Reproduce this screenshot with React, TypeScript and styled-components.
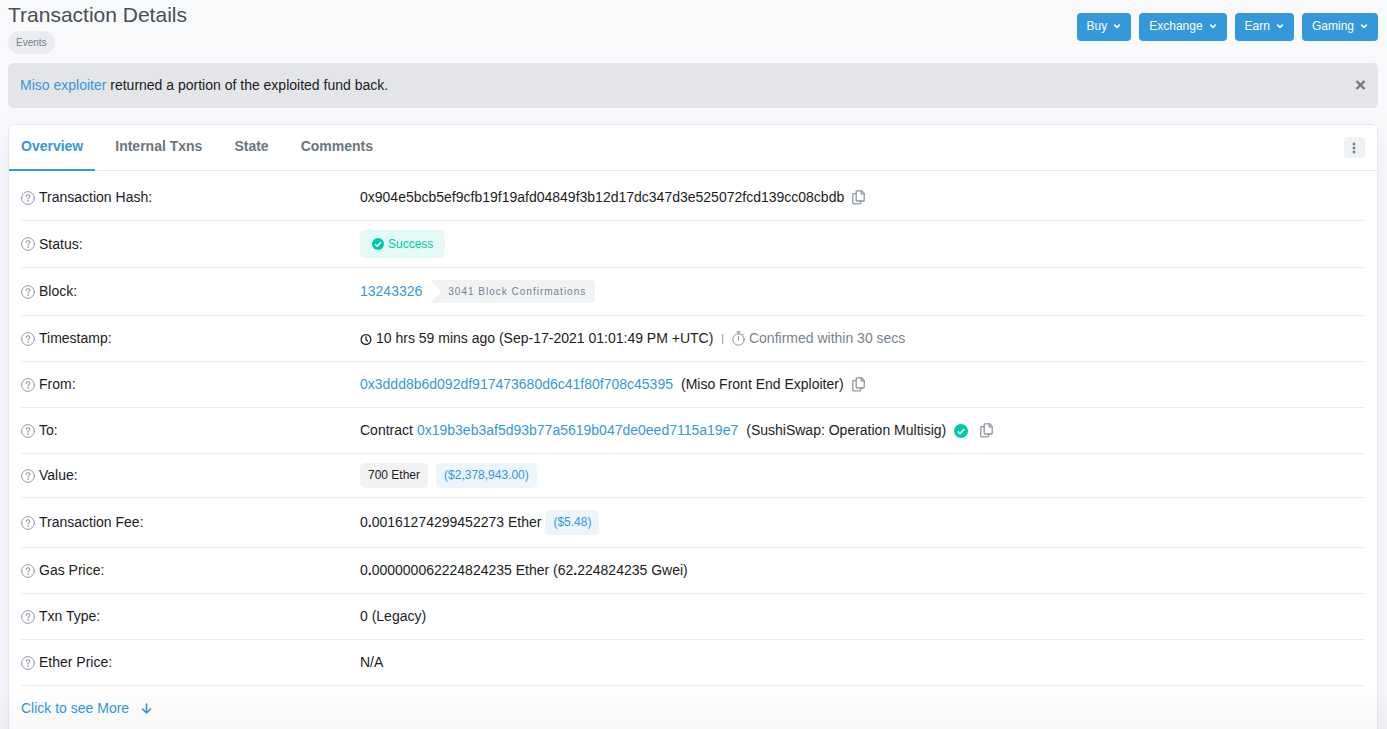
import React from "react";
import styled, { createGlobalStyle, css } from "styled-components";

const Global = createGlobalStyle`
  *, *::before, *::after { box-sizing: border-box; }
  body {
    margin: 0;
    background: #f8f9fb;
    color: #1a1c1e;
    font: 14px/22px "Liberation Sans", Arial, sans-serif;
  }
  button { font: inherit; cursor: pointer; }
`;

const Page = styled.div`
  padding: 0 9px 0 8px;
`;

const Header = styled.header`
  display: flex;
  justify-content: space-between;
  align-items: flex-start;
`;

const Title = styled.h1`
  margin: 0;
  padding: 3px 0 4px;
  font-size: 21px;
  line-height: 24px;
  font-weight: 400;
  color: #4a4f55;
`;

const Tag = styled.span`
  display: block;
  width: max-content;
  padding: 0 8px;
  border-radius: 12px;
  background: #ebecf0;
  color: #77838f;
  font-size: 10px;
  line-height: 23px;
`;

const Actions = styled.nav`
  display: flex;
  gap: 8px;
  padding-top: 13px;
`;

const ActionButton = styled.button`
  display: flex;
  align-items: center;
  gap: 6px;
  padding: 4px 10px 6px;
  border: 0;
  border-radius: 4px;
  background: #3498db;
  color: #fff;
  font-size: 12px;
  line-height: 18px;
`;

const Notice = styled.div`
  display: flex;
  justify-content: space-between;
  align-items: center;
  margin: 9px 0 16px;
  padding: 11px 12px 12px;
  border-radius: 5px;
  background: #e4e5e9;
`;

const Link = styled.a`
  color: #3498db;
  text-decoration: none;
`;

const IconButton = styled.button`
  display: inline-flex;
  align-items: center;
  padding: 0;
  border: 0;
  background: none;
  color: #77838f;
`;

const CopyButton = styled(IconButton)`
  color: #8c98a4;
`;

const Card = styled.main`
  border: 1px solid #e7eaf3;
  border-radius: 6px 6px 0 0;
  background: #fff;
  box-shadow: 0 8px 20px rgba(189, 197, 209, 0.2);
`;

const TabBar = styled.div`
  display: flex;
  justify-content: space-between;
  align-items: center;
  padding-right: 12px;
  border-bottom: 1px solid #e7eaf3;
`;

const Tabs = styled.div`
  display: flex;
  gap: 8px;
  margin-bottom: -1px;
`;

const Tab = styled.button<{ $active?: boolean }>`
  padding: 10px 12px 12px;
  border: 0;
  border-bottom: 2px solid ${(p) => (p.$active ? "#3498db" : "transparent")};
  background: none;
  color: ${(p) => (p.$active ? "#3498db" : "#6c757e")};
  font-weight: 700;
  line-height: 22px;
`;

const MoreButton = styled(IconButton)`
  padding: 4px;
  border-radius: 4px;
  background: #f0f1f3;
`;

const Details = styled.dl`
  margin: 0;
  padding: 4px 12px 0;
  line-height: 21px;
`;

const Row = styled.div<{ $pad: number }>`
  display: grid;
  grid-template-columns: 1fr 3fr;
  column-gap: 4px;
  align-items: center;
  padding: ${(p) => p.$pad}px 0;
  border-bottom: 1px solid #e9ecf2;
`;

const Label = styled.dt`
  display: flex;
  align-items: center;
  gap: 4px;
  svg { color: #8c98a4; }
`;

const Value = styled.dd<{ $gap: number }>`
  display: flex;
  flex-wrap: wrap;
  align-items: center;
  column-gap: ${(p) => p.$gap}px;
  min-height: 27px;
  margin: 0;
`;

const Group = styled.span<{ $gap?: number }>`
  display: inline-flex;
  align-items: center;
  gap: ${(p) => p.$gap ?? 4}px;
`;

const Muted = styled(Group)`
  color: #77838f;
`;

const Divider = styled.span`
  color: #77838f;
  font-size: 10px;
`;

const tones = {
  success: css`background: #e5f9f6; color: #00c9a7;`,
  neutral: css`background: #f1f2f4; color: #1e2022;`,
  info: css`background: #ebf5fb; color: #3498db;`,
};

const Badge = styled.span<{ $tone: keyof typeof tones }>`
  display: inline-flex;
  align-items: center;
  gap: 4px;
  padding: 0 8px;
  border-radius: 5px;
  font-size: 12px;
  line-height: 25px;
  ${(p) => tones[p.$tone]}
`;

const StatusBadge = styled(Badge)`
  padding: 0 12px;
  line-height: 28px;
`;

const Confirmations = styled.span`
  padding: 0 9px 0 18px;
  border-radius: 0 4px 4px 0;
  background: #f1f2f4;
  clip-path: polygon(0 0, 100% 0, 100% 100%, 0 100%, 11px 50%);
  color: #77838f;
  font-size: 10px;
  line-height: 23px;
  letter-spacing: 1px;
`;

const MoreLink = styled(Link)`
  display: inline-flex;
  align-items: center;
  gap: 12px;
  padding: 11px 12px 12px;
`;

const BottomFade = styled.div`
  position: fixed;
  inset: auto 0 0;
  height: 44px;
  background: linear-gradient(rgba(0, 0, 0, 0), rgba(0, 0, 0, 0.03));
  pointer-events: none;
`;

const stroke = { fill: "none", stroke: "currentColor", strokeLinecap: "round", strokeLinejoin: "round" } as const;

const Help = () => (
  <svg width="14" height="14" viewBox="0 0 14 14" {...stroke} aria-hidden="true">
    <circle cx="7" cy="7" r="6.4" />
    <path d="M5.2 5.4C5.3 4.3 6 3.8 7 3.8s1.9.6 1.9 1.5C8.900 6.600 7 6.700 7 8" strokeWidth="1.100" />
    <circle cx="7" cy="10" r=".5" fill="currentColor" strokeWidth=".5" />
  </svg>
);

const Check = ({ size = 12 }: { size?: number }) => (
  <svg width={size} height={size} viewBox="0 0 14 14" fill="none" aria-hidden="true">
    <circle cx="7" cy="7" r="7" fill="#00c9a7" />
    <path d="M3.700 7.300 6.100 9.600 10.400 5" stroke="#fff" strokeWidth="1.700" />
  </svg>
);

const Chevron = () => (
  <svg width="8" height="8" viewBox="0 0 8 8" {...stroke} strokeWidth="1.700" aria-hidden="true">
    <path d="M1.700 3.200 4 5.400 6.300 3.200" />
  </svg>
);

const Clock = () => (
  <svg width="12" height="12" viewBox="0 0 12 12" {...stroke} strokeWidth="1.200" aria-hidden="true">
    <circle cx="6" cy="6.500" r="4.900" />
    <path d="M6 3.700v3l1.600 1.300" />
  </svg>
);

const Stopwatch = () => (
  <svg width="13" height="15" viewBox="0 0 13 15" {...stroke} strokeWidth=".9" aria-hidden="true">
    <circle cx="6.500" cy="8.500" r="5.700" />
    <path d="M4.800.8h3.400M6.500.8v2M6.500 5.500v3.500M11 3.700l.8-.8" />
  </svg>
);

const Copy = () => (
  <CopyButton type="button" aria-label="Copy to clipboard">
    <svg width="13" height="15" viewBox="0 0 13 15" {...stroke} strokeWidth="1.300" aria-hidden="true">
      <path d="M5 .8h4.600l2.600 2.600v6.800c0 .5-.3.800-.8.800H5c-.5 0-.8-.3-.8-.8V1.600c0-.5.3-.8.800-.8z" />
      <path d="M9.200.8v3h3M4.200 3.600H1.600c-.5 0-.8.3-.8.800v8.700c0 .5.3.8.8.8h6.200c.5 0 .8-.3.800-.8V11" />
    </svg>
  </CopyButton>
);

const menus = ["Buy", "Exchange", "Earn", "Gaming"];
const tabs = ["Overview", "Internal Txns", "State", "Comments"];

type ItemProps = { label: string; pad?: number; gap?: number; children: React.ReactNode };

const Item = ({ label, pad = 9, gap = 8, children }: ItemProps) => (
  <Row $pad={pad}>
    <Label><Help />{label}:</Label>
    <Value $gap={gap}>{children}</Value>
  </Row>
);

export default function App() {
  return (
    <>
      <Global />
      <Page>
        <Header>
          <div>
            <Title>Transaction Details</Title>
            <Tag>Events</Tag>
          </div>
          <Actions>
            {menus.map((m) => <ActionButton key={m} type="button">{m}<Chevron /></ActionButton>)}
          </Actions>
        </Header>
        <Notice>
          <span><Link href="#exploiter">Miso exploiter</Link> returned a portion of the exploited fund back.</span>
          <IconButton type="button" aria-label="Close">
            <svg width="11" height="11" viewBox="0 0 11 11" fill="none" stroke="#77797d" strokeWidth="2.400" aria-hidden="true">
              <path d="M1.500 1l8 8M9.500 1l-8 8" />
            </svg>
          </IconButton>
        </Notice>
        <Card>
          <TabBar>
            <Tabs role="tablist">
              {tabs.map((t, i) => <Tab key={t} type="button" role="tab" aria-selected={i === 0} $active={i === 0}>{t}</Tab>)}
            </Tabs>
            <MoreButton type="button" aria-label="More options">
              <svg width="13" height="13" viewBox="0 0 13 13" fill="currentColor" aria-hidden="true">
                <circle cx="6" cy="3" r="1.500" /><circle cx="6" cy="7" r="1.500" /><circle cx="6" cy="11" r="1.500" />
              </svg>
            </MoreButton>
          </TabBar>
          <Details>
            <Item label="Transaction Hash">0x904e5bcb5ef9cfb19f19afd04849f3b12d17dc347d3e525072fcd139cc08cbdb<Copy /></Item>
            <Item label="Status"><StatusBadge $tone="success"><Check />Success</StatusBadge></Item>
            <Item label="Block" pad={10}><Link href="#block">13243326</Link><Confirmations>3041 Block Confirmations</Confirmations></Item>
            <Item label="Timestamp">
              <Group><Clock />10 hrs 59 mins ago (Sep-17-2021 01:01:49 PM +UTC)</Group>
              <Divider>|</Divider>
              <Muted><Stopwatch />Confirmed within 30 secs</Muted>
            </Item>
            <Item label="From"><Link href="#from">0x3ddd8b6d092df917473680d6c41f80f708c45395</Link>(Miso Front End Exploiter)<Copy /></Item>
            <Item label="To">
              <Group>Contract <Link href="#to">0x19b3eb3af5d93b77a5619b047de0eed7115a19e7</Link></Group>
              (SushiSwap: Operation Multisig)
              <Group $gap={12}><Check size={14} /><Copy /></Group>
            </Item>
            <Item label="Value" pad={8}><Badge $tone="neutral">700 Ether</Badge><Badge $tone="info">($2,378,943.00)</Badge></Item>
            <Item label="Transaction Fee" gap={4} pad={11}><span>0<b>.</b>00161274299452273 Ether</span><Badge $tone="info">($5.48)</Badge></Item>
            <Item label="Gas Price"><span>0<b>.</b>000000062224824235 Ether (62<b>.</b>224824235 Gwei)</span></Item>
            <Item label="Txn Type">0 (Legacy)</Item>
            <Item label="Ether Price">N/A</Item>
          </Details>
          <MoreLink href="#more">
            Click to see More
            <svg width="11" height="11" viewBox="0 0 11 11" {...stroke} strokeWidth="1.600" aria-hidden="true">
              <path d="M5.500 1v9M1.500 6l4 4 4-4" />
            </svg>
          </MoreLink>
        </Card>
      </Page>
      <BottomFade />
    </>
  );
}
